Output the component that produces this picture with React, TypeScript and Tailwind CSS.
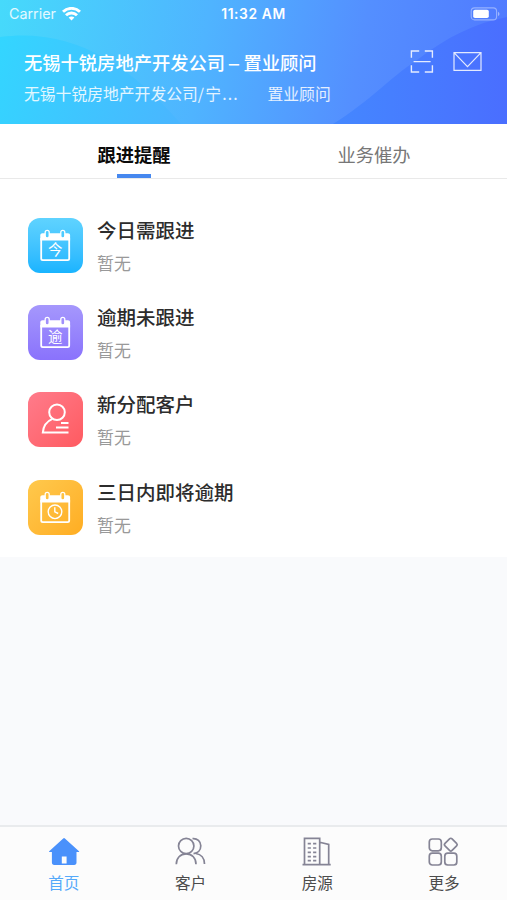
import type { ReactNode } from 'react'

type RowItem = { title: string; tile: string; icon: ReactNode }
type NavItem = { label: string; active?: boolean; icon: ReactNode }

// Calendar outline shared by three of the reminder tiles
function CalendarIcon({ children }: { children: ReactNode }) {
  return (
    <svg className="size-full" viewBox="0 0 55 55" fill="none">
      <path d="M12.3 17.6c0-1.6.8-2.3 2.2-2.3h25.4c1.4 0 2.2.7 2.2 2.3v4.8H12.3z" fill="white" />
      <path d="M13.2 20v20.6c0 1 .6 1.6 1.6 1.6h24.8c1 0 1.6-.6 1.6-1.6V20" stroke="white" strokeWidth="1.8" />
      <g className="fill-current" stroke="white" strokeWidth="1.3">
        <rect x="17.2" y="12.3" width="4" height="7.6" rx="2" />
        <rect x="32.8" y="12.3" width="4" height="7.6" rx="2" />
      </g>
      {children}
    </svg>
  )
}

function TileText({ children }: { children: string }) {
  return (
    <text x="27.2" y="37.4" fill="white" fontSize="14.5" textAnchor="middle">
      {children}
    </text>
  )
}

const rows: RowItem[] = [
  {
    title: '今日需跟进',
    tile: 'bg-linear-to-b from-[#5fd3ff] to-[#18b4ff] text-[#4dcbff]',
    icon: <CalendarIcon><TileText>今</TileText></CalendarIcon>,
  },
  {
    title: '逾期未跟进',
    tile: 'bg-linear-to-b from-[#a597fc] to-[#8a72fc] text-[#a08ffb]',
    icon: <CalendarIcon><TileText>逾</TileText></CalendarIcon>,
  },
  {
    title: '新分配客户',
    tile: 'bg-linear-to-br from-[#ff7b8b] to-[#ff5a60]',
    icon: (
      <svg className="size-full" viewBox="0 0 55 55" fill="none" stroke="white" strokeWidth="2">
        <circle cx="29" cy="20.2" r="7.8" />
        <path d="M24.5 26.8C18.8 29.2 15.3 34 14.8 40.6H40.5" />
        <path d="M33 31h7.5M28 35.6h12.5" />
      </svg>
    ),
  },
  {
    title: '三日内即将逾期',
    tile: 'bg-linear-to-br from-[#ffc94c] to-[#ffad20] text-[#ffc13f]',
    icon: (
      <CalendarIcon>
        <g stroke="white" strokeWidth="1.4">
          <circle cx="27" cy="31.8" r="6.8" />
          <path d="M26.8 27.3v4.6l3.4 1.6" />
        </g>
      </CalendarIcon>
    ),
  },
]

const navItems: NavItem[] = [
  {
    label: '首页',
    active: true,
    icon: (
      <svg className="size-8" viewBox="0 0 32 32" fill="#4a91fb">
        <path
          fillRule="evenodd"
          d="M15.2 3.4a1.3 1.3 0 0 1 1.7 0L31 16.2c.4.4.2.9-.4.9h-2.1v10.4c0 1.6-.8 2.4-2.4 2.4H6.3c-1.6 0-2.4-.8-2.4-2.4V17.1H1.6c-.6 0-.8-.5-.4-.9zM13.8 21.4v7h4.8v-7z"
        />
      </svg>
    ),
  },
  {
    label: '客户',
    icon: (
      <svg className="size-8" viewBox="0 0 32 32" fill="none" stroke="#858495" strokeWidth="1.7">
        <circle cx="11.2" cy="11" r="7.7" />
        <path d="M1.3 29.2c0-6.2 4-10.3 9.9-10.3s9.8 4.1 9.8 10.3" />
        <path d="M17.5 3.6c4.8-.5 8.3 2.8 8.3 7.2 0 4.2-3 7.4-7.3 7.8" />
        <path d="M20.8 18.5c5.3.7 8.7 4.8 8.7 10.5" />
      </svg>
    ),
  },
  {
    label: '房源',
    icon: (
      <svg className="size-8" viewBox="0 0 32 32" fill="none" stroke="#858495" strokeWidth="1.7">
        <path d="M3.5 29.6V3.3h15.2v26.3M18.7 7.2l9 2.3v20.1M1.5 29.7h28.2" />
        <path d="M6.7 8.7h3.2m2.2 0h3.2M6.7 13h3.2m2.2 0h3.2M6.7 17.3h3.2m2.2 0h3.2M6.7 21.6h3.2m2.2 0h3.2M6.7 25.7h3.2m2.2 0h3.2" />
      </svg>
    ),
  },
  {
    label: '更多',
    icon: (
      <svg className="size-8" viewBox="0 0 32 32" fill="none" stroke="#858495" strokeWidth="1.7">
        <rect x="1.3" y="4" width="12" height="11.8" rx="3" />
        <rect x="1.3" y="18.2" width="12" height="11.8" rx="3" />
        <rect x="16.8" y="18.2" width="12" height="11.8" rx="3" />
        <rect x="17.8" y="4.6" width="10" height="10" rx="1.8" transform="rotate(45 22.8 9.6)" />
      </svg>
    ),
  },
]

function StatusBar() {
  return (
    <div className="relative grid h-7 grid-cols-3 items-center pl-[9px] pr-[7px] font-['Inter','Liberation_Sans',sans-serif] text-white">
      <div className="flex items-center gap-1.5 text-[14.3px] leading-none text-white/85">
        Carrier
        <svg className="h-3.5 w-[19px]" viewBox="0 0 19 14" fill="none" stroke="white" strokeWidth="2.9">
          <path d="M1 4.8c4.8-4.6 12.2-4.6 17 0" />
          <path d="M4 8.3c3.1-3 7.9-3 11 0" />
          <path d="M9.5 13.5 6.6 10.6c1.6-1.6 4.2-1.6 5.8 0z" fill="white" stroke="none" />
        </svg>
      </div>
      <div className="-ml-0.5 pt-px text-center text-[13.8px] font-semibold leading-none tracking-[0.6px]">11:32 AM</div>
      <svg className="h-3.5 w-[30px] justify-self-end" viewBox="0 0 30 14" fill="none">
        <rect x="1.2" y=".9" width="25.4" height="12" rx="3.4" stroke="white" strokeOpacity=".4" strokeWidth="1.1" />
        <rect x="3.2" y="2.8" width="15.6" height="8.2" rx="1.8" fill="white" />
        <path d="M28 4.7c2 .8 2 3.6 0 4.4z" fill="white" fillOpacity=".45" />
      </svg>
    </div>
  )
}

function Header() {
  return (
    <header className="relative h-[124px] shrink-0 overflow-hidden bg-[linear-gradient(100deg,#46dafb_0%,#4fb4ff_40%,#548fff_70%,#5078ff_100%)] text-white">
      {/* Background arcs */}
      <svg className="absolute inset-0 size-full" viewBox="0 0 507 124" preserveAspectRatio="none">
        <defs>
          <linearGradient id="arcLeft" gradientUnits="userSpaceOnUse" x1="0" y1="30" x2="185" y2="90">
            <stop offset="0" stopColor="#33d6ff" />
            <stop offset="1" stopColor="#49b6ff" />
          </linearGradient>
          <linearGradient id="arcRight" gradientUnits="userSpaceOnUse" x1="330" y1="0" x2="507" y2="0">
            <stop offset="0" stopColor="#4488ff" />
            <stop offset="1" stopColor="#4a6eff" />
          </linearGradient>
        </defs>
        <path d="M0 37C68 28 125 59 181 124H0z" fill="url(#arcLeft)" />
        <path d="M333 124C370 101 387 80 417 60C447 37 475 23 507 17V124z" fill="url(#arcRight)" />
      </svg>
      <StatusBar />
      <div className="relative flex justify-between pl-6 pr-[25px]">
        <div className="pt-5">
          <h1 className="flex text-[18.3px] font-medium leading-7">
            无锡十锐房地产开发公司
            <span className="flex w-[18.3px] justify-center">
              <span className="scale-x-125">–</span>
            </span>
            置业顾问
          </h1>
          <p className="mt-1.5 flex text-[15.8px] leading-6 text-white/85">
            <span className="w-[243.5px]">
              无锡十锐房地产开发公司<span className="tracking-[1.2px]">/宁...</span>
            </span>
            <span>置业顾问</span>
          </p>
        </div>
        <div className="flex gap-[19px] pt-[21px]">
          <svg className="h-6 w-[25px]" viewBox="0 0 25 24" fill="none" stroke="white" strokeOpacity=".85" strokeWidth="1.4">
            <path d="M2.4 8.8V2h7.8M15.8 2h7.6v6.8M2.4 16.2V23h7.8M15.8 23h7.6v-6.8M4.6 12.6h17" />
          </svg>
          <svg className="h-6 w-[29px]" viewBox="0 0 29 24" fill="none" stroke="white" strokeOpacity=".85" strokeWidth="1.2">
            <path d="M1 3.6h27v17.8H1zM1 3.6l13.5 14L28 3.6" />
          </svg>
        </div>
      </div>
    </header>
  )
}

export default function App() {
  return (
    <div className="flex h-[900px] w-full flex-col bg-[#f9fafc] font-['Noto_Sans_CJK_SC',sans-serif] antialiased">
      <Header />

      {/* Tabs */}
      <div className="flex h-[55px] shrink-0 border-b border-[#e9e9e9] bg-white pl-[14px] pr-[13px] text-[18.3px] leading-7">
        <button className="relative flex flex-1 justify-center pt-4 font-bold text-[#0b0b0b]">
          跟进提醒
          <span className="absolute bottom-0 left-1/2 h-[4px] w-[34px] -translate-x-1/2 bg-[#4688ef]" />
        </button>
        <button className="flex flex-1 justify-center pt-4 text-[#777]">业务催办</button>
      </div>

      {/* Reminder list */}
      <ul className="flex h-[378px] shrink-0 flex-col bg-white pt-[38.6px]">
        {rows.map(row => (
          <li key={row.title} className="flex h-[87.4px] shrink-0 gap-3.5 pl-7">
            <div className={`size-[55px] overflow-hidden rounded-[12px] ${row.tile}`}>{row.icon}</div>
            <div className="-mt-[2px]">
              <h2 className="text-[19.5px] font-medium leading-7 text-[#2c2c2c]">{row.title}</h2>
              <p className="mt-[7px] text-[16.9px] leading-6 text-[#999]">暂无</p>
            </div>
          </li>
        ))}
      </ul>

      {/* Bottom navigation */}
      <nav className="mt-auto grid h-[75px] shrink-0 grid-cols-4 border-t-2 border-[#e9ebed] bg-[#fcfcfc]">
        {navItems.map(item => (
          <button key={item.label} className="flex flex-col items-center pl-px pt-[8px]">
            {item.icon}
            <span className={`mt-[3px] text-[15.6px] leading-6 ${item.active ? 'text-[#55a9fa]' : 'text-[#4c4c4c]'}`}>
              {item.label}
            </span>
          </button>
        ))}
      </nav>
    </div>
  )
}
